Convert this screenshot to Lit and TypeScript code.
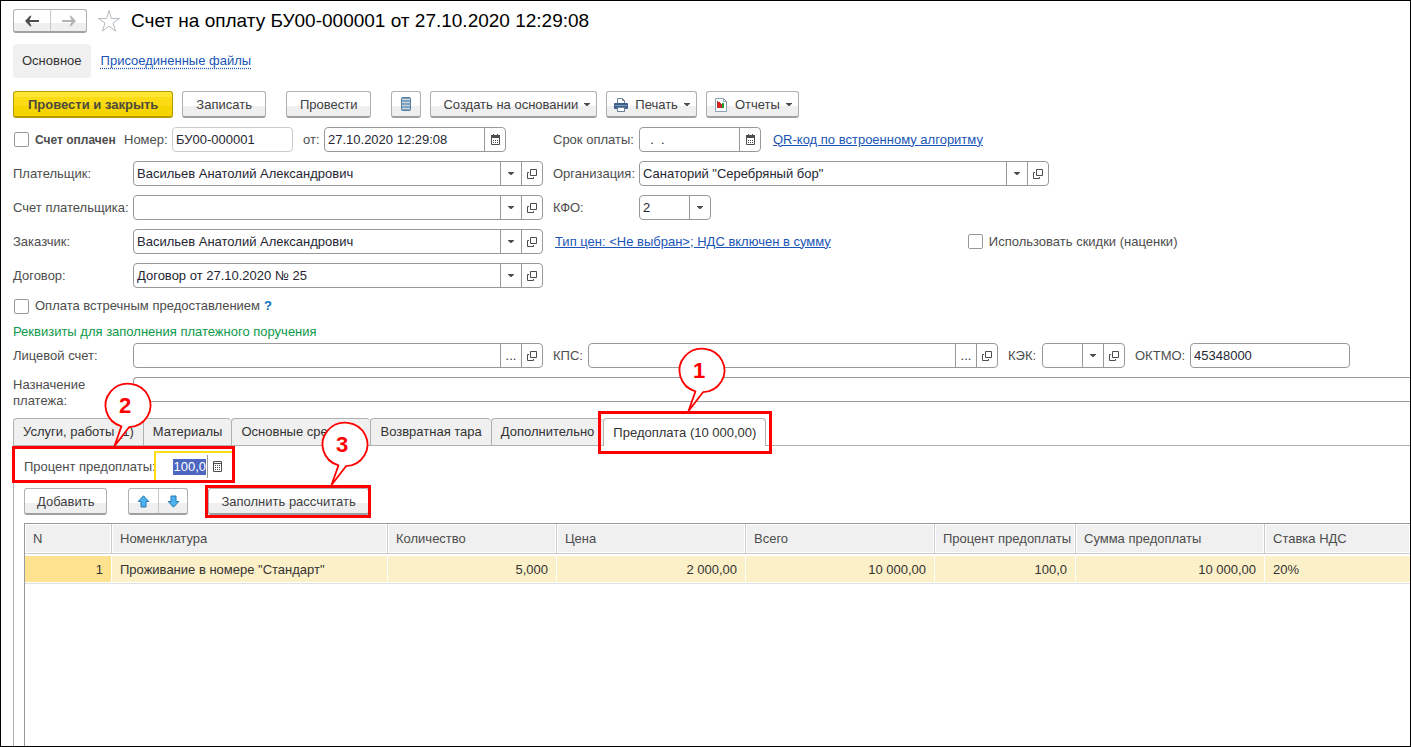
import { LitElement, html, css, svg, nothing } from "lit";
import { customElement } from "lit/decorators.js";

type Addon = "date" | "drop" | "open" | "dots";

const icons = {
  back: html`<svg width="16" height="12" viewBox="0 0 16 12"><path d="M6 .8 1 6l5 5.200h1.500L5.500 7H15V5H5.500l2-4.200z" fill="#4d4d4d"/></svg>`,
  forward: html`<svg width="16" height="12" viewBox="0 0 16 12"><path d="M10 .8 15 6l-5 5.200H8.500L10.500 7H1V5h9.500l-2-4.200z" fill="#b3b3b3"/></svg>`,
  star: html`<svg width="24" height="24" viewBox="0 0 24 24"><path d="M12 1.500l2.400 8h8.200L16 14l2.500 8L12 17.200 5.500 22 8 14 1.400 9.500h8.200z" fill="#fff" stroke="#b4bac0"/></svg>`,
  list: html`<svg width="12" height="16" viewBox="0 0 12 16"><rect x="1.500" y="1.500" width="9" height="13" rx="1" fill="#7fa3bf" stroke="#55809f"/><path d="M2 3.500h8M2 6.500h8M2 9.500h8M2 12.500h8" stroke="#c9d9e4"/></svg>`,
  print: html`<svg width="16" height="16" viewBox="0 0 16 16"><path d="M4.500 6V1.500h5l2 2V6" fill="#fff" stroke="#6d8399"/><path d="M9.500 1.500v2h2" fill="none" stroke="#6d8399"/><rect x="1" y="6" width="14" height="6" rx="1" fill="#3c5f8c"/><path d="M2 8.500h12" stroke="#7f9dbd"/><rect x="4.500" y="10.500" width="7" height="4" fill="#fff" stroke="#6d8399"/></svg>`,
  report: html`<svg width="16" height="14" viewBox="-1 0 16 14"><path d="M1.500.5h8l3 3v10h-11z" fill="#fff" stroke="#8ba0b3"/><path d="M9.500.5v3h3" fill="none" stroke="#8ba0b3"/><path d="M4 4h2v6H4zM7 6h1v4H7z" fill="#e81c1c"/><path d="M3 3v7h1V3zM6 5h1v5H6z" fill="#9b3a3a"/><path d="M8 5h2v5H8z" fill="#18a030"/></svg>`,
  caret: html`<svg width="6" height="3" viewBox="0 0 6 3"><path d="M0 0h6v.5L3.500 3h-1L0 .5z" fill="#4d4d4d"/></svg>`,
  date: html`<svg width="9" height="11" viewBox="0 0 9 11"><path d="M.5 1.500h8v9h-8z" fill="#fff" stroke="#4d4d4d"/><path d="M0 1h9v3H0zM2 0h1v2H2zM6 0h1v2H6z" fill="#4d4d4d"/><path d="M2 6.500h1m1 0h1m1 0h1M2 8.500h1m1 0h1m1 0h1" stroke="#4d4d4d"/></svg>`,
  open: html`<svg width="10" height="10" viewBox="0 0 10 10"><path d="M3.500.5h6v6h-6zM2 3.500H.5v6h6V8" fill="none" stroke="#4d4d4d"/></svg>`,
  calc: html`<svg width="9" height="11" viewBox="0 0 9 11"><path d="M.5.5h8v10h-8zM.5 2.500h8" fill="none" stroke="#4d4d4d"/><path d="M2 4.500h1m1 0h1m1 0h1M2 6.500h1m1 0h1m1 0h1M2 8.500h1m1 0h1m1 0h1" stroke="#4d4d4d"/></svg>`,
  up: html`<svg width="13" height="13" viewBox="0 0 13 13"><path d="M6.500.8 11.800 6.500H9v5.500H4V6.500H1.200z" fill="#4db2ee" stroke="#2479b4"/></svg>`,
  down: html`<svg width="13" height="13" viewBox="0 0 13 13"><path d="M6.500 12.200 11.800 6.500H9V1H4v5.500H1.200z" fill="#4db2ee" stroke="#2479b4"/></svg>`,
};

const addons: Record<Addon, { label: string; face: unknown }> = {
  date: { label: "Выбрать дату", face: icons.date },
  drop: { label: "Показать список", face: icons.caret },
  open: { label: "Открыть", face: icons.open },
  dots: { label: "Выбрать", face: "..." },
};

const tabs = [
  "Услуги, работы (1)",
  "Материалы",
  "Основные средства",
  "Возвратная тара",
  "Дополнительно",
  "Предоплата (10 000,00)",
];

const columns = [
  { title: "N", value: "1", num: true, cls: "c-n" },
  { title: "Номенклатура", value: 'Проживание в номере "Стандарт"', num: false, cls: "c-name" },
  { title: "Количество", value: "5,000", num: true, cls: "c-qty" },
  { title: "Цена", value: "2 000,00", num: true, cls: "c-sum" },
  { title: "Всего", value: "10 000,00", num: true, cls: "c-sum" },
  { title: "Процент предоплаты", value: "100,0", num: true, cls: "c-pct" },
  { title: "Сумма предоплаты", value: "10 000,00", num: true, cls: "c-sum" },
  { title: "Ставка НДС", value: "20%", num: false, cls: "c-vat" },
];

@customElement("app-root")
export class AppRoot extends LitElement {
  static styles = css`
    :host {
      display: block;
      box-sizing: border-box;
      min-height: 100vh;
      border: 1px solid #000;
      background: #fff;
      color: #4d4d4d;
      font: 13px/16px "Liberation Sans", Arial, sans-serif;
      overflow: hidden;
    }
    * { box-sizing: border-box; }
    svg { display: block; flex: none; }
    button, input, select { font: inherit; color: inherit; margin: 0; }
    a { color: #1a55b5; }
    .page { display: flex; flex-direction: column; min-height: calc(100vh - 2px); padding: 8px 0 0 12px; }
    .row { display: flex; align-items: center; }

    .head { height: 24px; }
    .split { display: flex; border: 1px solid #b0b0b0; border-bottom: 2px solid #a0a0a0; border-radius: 3px; background: linear-gradient(#fff 60%, #efefef 60%); }
    .split button { display: flex; align-items: center; justify-content: center; border: 0; background: none; padding: 0; }
    .split button + button { border-left: 1px solid #c8c8c8; }
    .nav button { width: 36px; height: 21px; }
    .fav { border: 0; background: none; padding: 0; margin-left: 10px; }
    h1 { margin: 0 0 0 10px; font-size: 19px; line-height: 24px; font-weight: 400; color: #000; white-space: nowrap; }

    .sections { gap: 10px; margin-top: 11px; }
    .section { display: flex; align-items: center; height: 34px; padding: 0 9px; border-radius: 4px; background: #f0f0f0; color: #333; text-decoration: none; }
    .files { text-decoration: underline dotted; text-underline-offset: 3px; }

    .tools { gap: 9px; margin-top: 13px; }
    .btn { display: flex; align-items: center; justify-content: center; height: 27px; padding: 1px 13px 0; border: 1px solid #b0b0b0; border-bottom: 2px solid #a0a0a0; border-radius: 3px; background: linear-gradient(#fff 60%, #efefef 60%); white-space: nowrap; color: #404040; }
    .btn.main { padding: 1px 14px 0; background: linear-gradient(#ffe633 20%, #fbdc14 20% 60%, #f5d400 60%); border-color: #b59b00; font-weight: 700; color: #4d4a3a; }
    .btn.menu { gap: 6px; padding: 1px 6px 0 12px; }
    .btn.pic { gap: 6px; padding: 1px 6px 0; }
    .btn.square { width: 30px; padding: 0; }
    .apart { margin-left: 11px; }

    .form { display: grid; grid-template-columns: 530px 1fr; column-gap: 10px; row-gap: 9px; margin-top: 9px; }
    .lab { flex: none; width: 120px; white-space: nowrap; }
    .lab.r { width: 86px; }
    .field { display: flex; height: 25px; flex: none; border: 1px solid #999; border-radius: 4px; background: #fff; color: #262633; overflow: hidden; }
    .field input, .field select { flex: 1; min-width: 0; width: 0; height: 100%; border: 0; padding: 0 3px; background: none; outline: 0; appearance: none; border-radius: 0; }
    .field button { display: flex; align-items: center; justify-content: center; flex: none; width: 21px; height: 100%; padding: 0; border: 0; border-left: 1px solid #999; background: none; color: #333; }
    .w-ref { width: 410px; }
    .w-num { width: 121px; border-color: #ccc; }
    .w-dt { width: 182px; }
    .w-date { width: 122px; }
    .w-kfo { width: 72px; position: relative; }
    .w-kek { width: 83px; }
    .w-okt { width: 160px; }
    .drop { position: absolute; top: 0; right: 0; width: 21px; height: 100%; display: flex; align-items: center; justify-content: center; border-left: 1px solid #999; pointer-events: none; }
    .check { display: flex; align-items: center; gap: 6px; white-space: nowrap; }
    .check input { appearance: none; width: 15px; height: 15px; margin: 0 0 0 1px; border: 1px solid #999; border-radius: 2px; background: #fff; }
    .paid { font-size: 12px; font-weight: 700; width: 111px; }
    .tight { width: 48px; flex: none; }
    .from { width: 21px; margin-left: 10px; }
    .qr { margin-left: 12px; }
    .prices { margin-left: 2px; }
    .discount { margin-left: 136px; }

    .counter { margin-top: 10px; }
    .help { color: #0a70b8; font-weight: 700; text-decoration: none; margin-left: 4px; }
    .group { margin: 10px 0 3px; color: #0d9a4a; font-weight: 400; font-size: 13px; line-height: 16px; }
    .kps { width: 35px; margin-left: 10px; }
    .kek { width: 34px; margin-left: 10px; }
    .okt { width: 55px; margin-left: 10px; }
    .purpose { margin-top: 9px; align-items: flex-start; }
    .purpose .lab { white-space: normal; padding-right: 30px; }
    .purpose .field { flex: 1; border-right: 0; border-radius: 4px 0 0 4px; }

    .tabs { display: flex; height: 28px; margin-top: 9px; border-bottom: 1px solid #b0b0b0; }
    .tab { position: relative; height: 27px; padding: 0 9px; border: 1px solid #b0b0b0; border-bottom: 0; border-right: 0; border-radius: 4px 4px 0 0; background: #f0f0f0; color: #333; white-space: nowrap; }
    .tab.on { height: 28px; background: #fff; border-right: 1px solid #b0b0b0; }
    .panel { display: flex; flex-direction: column; flex: 1; border-left: 1px solid #b0b0b0; padding: 5px 0 0 10px; }
    .percent { position: relative; height: 31px; align-self: flex-start; }
    .percent label { width: 130px; white-space: nowrap; }
    .field.active { width: 80px; height: 31px; border: 2px solid #ffdc14; border-radius: 0; align-items: center; }
    .field.active input { padding: 0 1px; text-align: right; height: 16px; }
    .field.active input::selection { background: #4d66bf; color: #fff; }
    .field.active button { width: 25px; height: 23px; padding-right: 5px; }
    .cmds { margin-top: 6px; }
    .cmds .btn { padding: 1px 12px 0; }
    .moves { margin-left: 21px; }
    .moves button { width: 29px; height: 24px; }
    .fill { position: relative; margin-left: 20px; }

    .grid { flex: 1; margin-top: 8px; border: 1px solid #999; border-right: 0; border-bottom: 0; }
    table { width: 100%; table-layout: fixed; border-collapse: separate; border-spacing: 0; }
    th, td { overflow: hidden; white-space: nowrap; text-align: left; font-weight: 400; padding: 0 8px; }
    th { height: 30px; background: #f0f0f0; border-right: 1px solid #ccc; border-bottom: 1px solid #ccc; box-shadow: inset 0 0 0 1px #fff; }
    td { height: 29px; padding-top: 1px; background: #fcf0c8; color: #333; border-right: 1px solid #fff; border-top: 2px solid #fff; border-bottom: 1px solid #fff; }
    th:last-child, td:last-child { border-right: 0; }
    td.num { text-align: right; }
    td:first-child { background: #ffe28f; }
    tbody { box-shadow: 0 1px #e0e0e0; }
    .c-n { width: 87px; }
    .c-name { width: 276px; }
    .c-qty { width: 169px; }
    .c-sum { width: 189px; }
    .c-pct { width: 141px; }

    .mark { position: absolute; border: 3px solid #f00; pointer-events: none; z-index: 2; }
    .mark svg { position: absolute; top: -67px; overflow: visible; }
    .mark text { font: 700 22px "Liberation Sans", Arial, sans-serif; fill: #f00; }
    .m1 { left: -6px; top: -8px; width: 174px; height: 43px; }
    .m1 svg { left: 76px; }
    .m2 { left: -12px; top: -5px; width: 223px; height: 37px; }
    .m2 svg { left: 88px; }
    .m3 { left: -4px; top: -4px; width: 166px; height: 33px; }
    .m3 svg { left: 112px; }
  `;

  firstUpdated() {
    const input = this.renderRoot.querySelector<HTMLInputElement>("#percent");
    input?.focus();
    input?.select();
  }

  private field(id: string, cls: string, value: string, add: Addon[] = []) {
    return html`<div class="field ${cls}">
      <input id=${id} type="text" .value=${value} />
      ${add.map((a) => html`<button type="button" aria-label=${addons[a].label}>${addons[a].face}</button>`)}
    </div>`;
  }

  private mark(n: number) {
    return html`<span class="mark m${n}"><svg width="48" height="66" viewBox="0 0 48 66">${svg`
      <path d="M18.500 44.300 11.500 64 26 45.200A22.500 21.800 0 1 0 18.500 44.300z" fill="#fff" stroke="#f00" stroke-width="1.800" stroke-linejoin="round"/>
      <text x="22" y="31" text-anchor="middle">${n}</text>`}</svg></span>`;
  }

  render() {
    return html`<main class="page">
      <header class="row head">
        <div class="split nav">
          <button type="button" aria-label="Назад">${icons.back}</button>
          <button type="button" aria-label="Вперед">${icons.forward}</button>
        </div>
        <button class="fav" type="button" aria-label="В избранное">${icons.star}</button>
        <h1>Счет на оплату БУ00-000001 от 27.10.2020 12:29:08</h1>
      </header>

      <nav class="row sections">
        <a class="section" href="#main">Основное</a>
        <a class="files" href="#files">Присоединенные файлы</a>
      </nav>

      <div class="row tools">
        <button class="btn main" type="button">Провести и закрыть</button>
        <button class="btn" type="button">Записать</button>
        <button class="btn apart" type="button">Провести</button>
        <button class="btn square apart" type="button" aria-label="Движения документа">${icons.list}</button>
        <button class="btn menu" type="button">Создать на основании ${icons.caret}</button>
        <button class="btn pic" type="button">${icons.print} Печать ${icons.caret}</button>
        <button class="btn pic" type="button">${icons.report} Отчеты ${icons.caret}</button>
      </div>

      <div class="form">
        <div class="row">
          <label class="check paid"><input type="checkbox" />Счет оплачен</label>
          <label class="tight" for="num">Номер:</label>
          ${this.field("num", "w-num", "БУ00-000001")}
          <label class="from" for="dt">от:</label>
          ${this.field("dt", "w-dt", "27.10.2020 12:29:08", ["date"])}
        </div>
        <div class="row">
          <label class="lab r" for="due">Срок оплаты:</label>
          ${this.field("due", "w-date", "  .  .", ["date"])}
          <a class="qr" href="#qr">QR-код по встроенному алгоритму</a>
        </div>
        <div class="row">
          <label class="lab" for="payer">Плательщик:</label>
          ${this.field("payer", "w-ref", "Васильев Анатолий Александрович", ["drop", "open"])}
        </div>
        <div class="row">
          <label class="lab r" for="org">Организация:</label>
          ${this.field("org", "w-ref", 'Санаторий "Серебряный бор"', ["drop", "open"])}
        </div>
        <div class="row">
          <label class="lab" for="acc">Счет плательщика:</label>
          ${this.field("acc", "w-ref", "", ["drop", "open"])}
        </div>
        <div class="row">
          <label class="lab r" for="kfo">КФО:</label>
          <div class="field w-kfo"><select id="kfo"><option>2</option></select><span class="drop">${icons.caret}</span></div>
        </div>
        <div class="row">
          <label class="lab" for="client">Заказчик:</label>
          ${this.field("client", "w-ref", "Васильев Анатолий Александрович", ["drop", "open"])}
        </div>
        <div class="row">
          <a class="prices" href="#prices">Тип цен: &lt;Не выбран&gt;; НДС включен в сумму</a>
          <label class="check discount"><input type="checkbox" />Использовать скидки (наценки)</label>
        </div>
        <div class="row">
          <label class="lab" for="contract">Договор:</label>
          ${this.field("contract", "w-ref", "Договор от 27.10.2020 № 25", ["drop", "open"])}
        </div>
      </div>

      <div class="row counter">
        <label class="check"><input type="checkbox" />Оплата встречным предоставлением</label>
        <a class="help" href="#help">?</a>
      </div>
      <h2 class="group">Реквизиты для заполнения платежного поручения</h2>
      <div class="row">
        <label class="lab" for="ls">Лицевой счет:</label>
        ${this.field("ls", "w-ref", "", ["dots", "open"])}
        <label class="kps" for="kps">КПС:</label>
        ${this.field("kps", "w-ref", "", ["dots", "open"])}
        <label class="kek" for="kek">КЭК:</label>
        ${this.field("kek", "w-kek", "", ["drop", "open"])}
        <label class="okt" for="okt">ОКТМО:</label>
        ${this.field("okt", "w-okt", "45348000")}
      </div>
      <div class="row purpose">
        <label class="lab" for="purpose">Назначение платежа:</label>
        ${this.field("purpose", "", "")}
      </div>

      <div class="tabs" role="tablist">
        ${tabs.map((t, i) => {
          const on = i === tabs.length - 1;
          return html`<button class="tab ${on ? "on" : ""}" type="button" role="tab" aria-selected=${on}>${t}${on ? this.mark(1) : nothing}</button>`;
        })}
      </div>
      <section class="panel">
        <div class="row percent">
          <label for="percent">Процент предоплаты:</label>
          <div class="field active">
            <input id="percent" type="text" value="100,0" />
            <button type="button" aria-label="Калькулятор">${icons.calc}</button>
          </div>
          ${this.mark(2)}
        </div>
        <div class="row cmds">
          <button class="btn" type="button">Добавить</button>
          <div class="split moves">
            <button type="button" aria-label="Переместить вверх">${icons.up}</button>
            <button type="button" aria-label="Переместить вниз">${icons.down}</button>
          </div>
          <button class="btn fill" type="button">Заполнить рассчитать${this.mark(3)}</button>
        </div>
        <div class="grid">
          <table>
            <thead><tr>${columns.map((c) => html`<th class=${c.cls} scope="col">${c.title}</th>`)}</tr></thead>
            <tbody><tr>${columns.map((c) => html`<td class=${c.num ? "num" : ""}>${c.value}</td>`)}</tr></tbody>
          </table>
        </div>
      </section>
    </main>`;
  }
}
